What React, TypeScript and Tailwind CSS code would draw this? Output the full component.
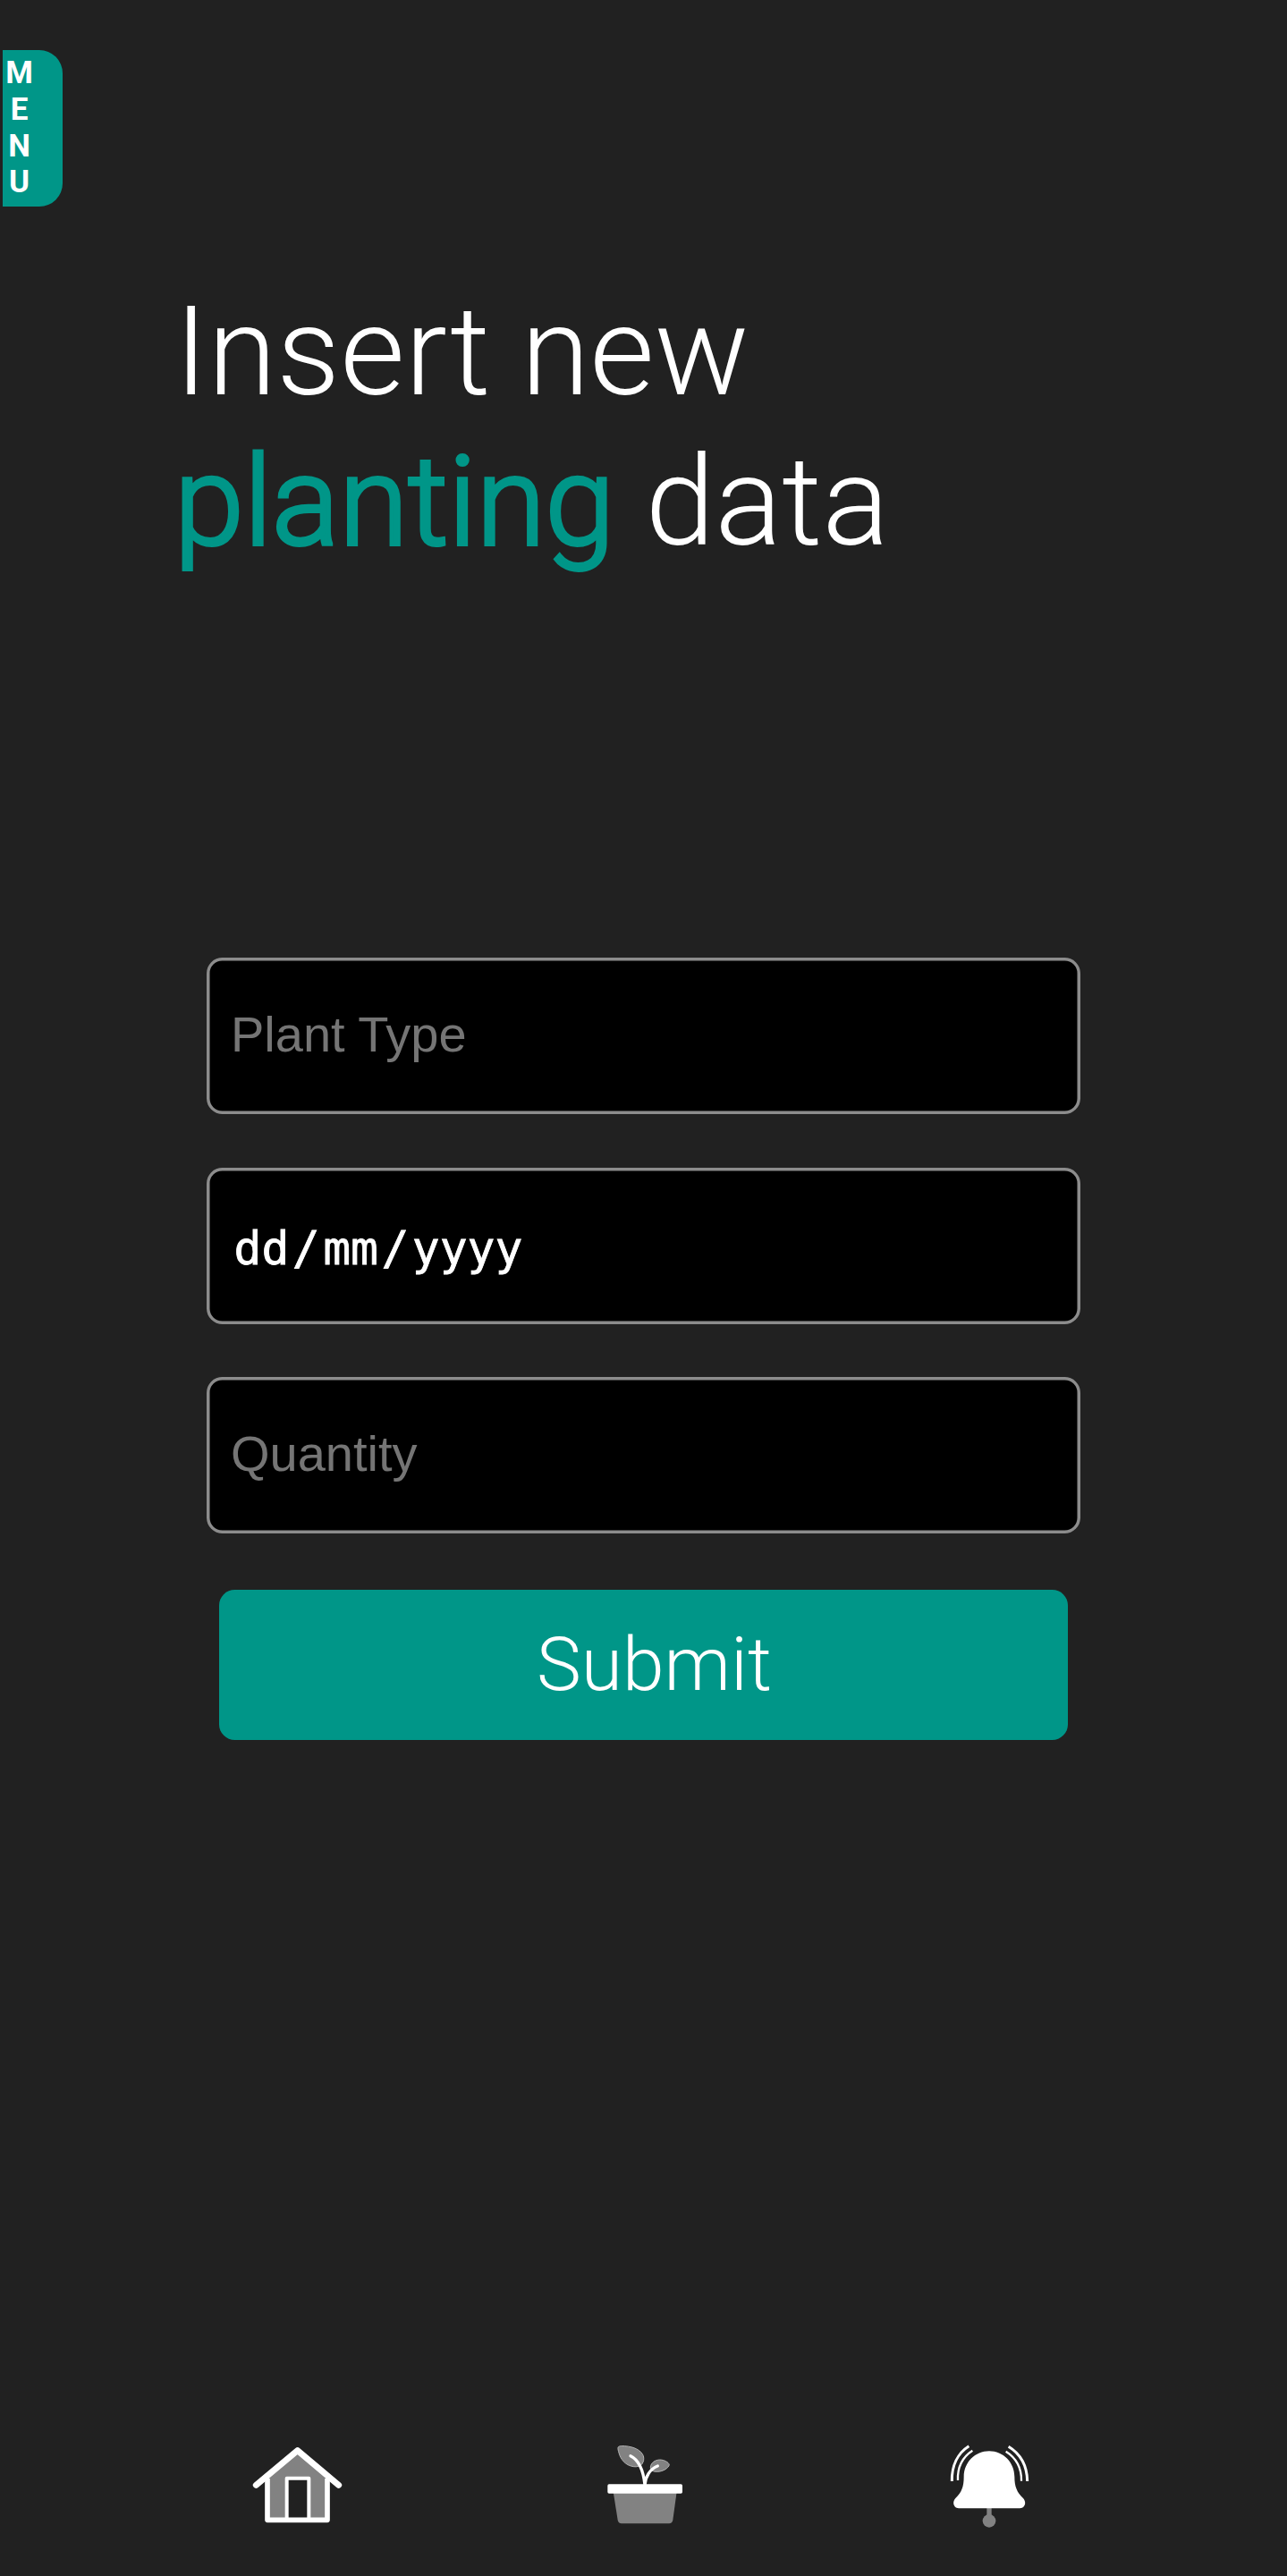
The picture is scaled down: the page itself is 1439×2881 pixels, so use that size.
import React from "react";

function HomeIcon() {
  return (
    <svg width="150" height="140" viewBox="0 0 450 420" fill="none">
      <path d="M118 183 218 100 318 183V323H118Z" fill="#828282" />
      <rect x="182" y="185" width="74" height="138" fill="#212121" />
      <path d="M117 186V325H318V186" stroke="#fff" strokeWidth="17" strokeLinejoin="round" />
      <path d="M182 320V185H256V320" stroke="#fff" strokeWidth="12" strokeLinejoin="round" />
      <path d="M79 208 218 92 356 208" stroke="#fff" strokeWidth="21" strokeLinecap="round" strokeLinejoin="round" />
    </svg>
  );
}

function PlantIcon() {
  return (
    <svg width="130" height="140" viewBox="0 0 390 420" fill="none">
      <path d="M77 230H290L277 325Q275 337 264 337H105Q94 337 92 325Z" fill="#828282" />
      <rect x="58" y="205" width="251" height="31" rx="5" fill="#fff" />
      <path
        d="M93 82C94 77 103 76 116 77C146 79 171 91 178 110C181 120 179 130 173 138C168 144 157 148 145 146C116 142 101 119 96 100C94 92 92 87 93 82Z"
        fill="#828282" stroke="#b4b4b4" strokeWidth="3"
      />
      <path
        d="M202 147C204 133 216 124 233 123C247 123 263 131 265 140C262 151 245 162 226 163C210 164 201 158 202 147Z"
        fill="#828282" stroke="#b4b4b4" strokeWidth="3"
      />
      <path d="M135 110C160 122 177 149 183 207C185 181 200 153 226 144" stroke="#fff" strokeWidth="10" strokeLinecap="round" strokeLinejoin="round" />
    </svg>
  );
}

function BellIcon() {
  return (
    <svg width="130" height="140" viewBox="0 0 390 420" fill="none">
      <path d="M198 283V328" stroke="#828282" strokeWidth="16" />
      <circle cx="198" cy="328" r="22" fill="#828282" />
      <path
        d="M198 94C245 94 283 132 283 180C283 213 291 232 312 252C325 267 317 286 301 286H96C80 286 72 267 85 252C106 232 113 213 113 180C113 132 151 94 198 94Z"
        fill="#fff"
      />
      <g stroke="#fff" strokeLinecap="butt">
        <path d="M130 77C92 101 72 144 73 195" strokeWidth="9" />
        <path d="M142 92C107 115 91 150 93 192" strokeWidth="7" />
        <path d="M263 79C302 103 325 142 326 195" strokeWidth="9" />
        <path d="M254 95C289 117 307 149 306 194" strokeWidth="7" />
      </g>
    </svg>
  );
}

const field =
  "flex h-[175px] w-[977px] items-center rounded-[17.5px] bg-black pb-[4px] pl-[27px] font-['Liberation_Sans',Arial,sans-serif] text-[56px] leading-[64px] text-[#757575] shadow-[inset_0_0_0_3.5px_#8c8c8c]";

export default function App() {
  return (
    <div className="flex h-[2881px] w-full flex-col overflow-hidden bg-[#212121] font-[Roboto,sans-serif] text-white">
      <button className="mt-[56px] ml-[3px] flex h-[175px] w-[67px] shrink-0 flex-col items-start rounded-r-[26px] bg-[#009688] pt-[6px] pl-[3px] text-[35px] leading-[40.8px] font-bold">
        {["M", "E", "N", "U"].map((letter) => (
          <span key={letter} className="block w-[31px] text-center">{letter}</span>
        ))}
      </button>

      <h1 className="mt-[78px] ml-[195px] text-[140px] leading-[168px] font-light whitespace-nowrap">
        Insert new
        <br />
        <span className="text-[#009688] [-webkit-text-stroke:4px_#009688]">planting</span> data
      </h1>

      <form className="mt-[426px] ml-[231px] flex w-[977px] flex-col">
        <div className={field}>Plant Type</div>
        <div className="mt-[60px] flex h-[175px] w-[977px] items-center rounded-[17.5px] bg-black pt-[5px] pl-[27px] font-['DejaVu_Sans_Mono',monospace] text-[51.3px] leading-[64px] [-webkit-text-stroke:0.8px_#fff] shadow-[inset_0_0_0_3.5px_#8c8c8c]">
          <span className="px-[3.5px]">dd</span>/<span className="px-[3.5px]">mm</span>/
          <span className="px-[3.5px]">yyyy</span>
        </div>
        <div className="mt-[59px]">
          <div className={field}>Quantity</div>
        </div>
        <button
          type="button"
          className="mt-[63px] ml-[14px] h-[168px] w-[949px] rounded-[17.5px] bg-[#009688] pl-[24px] text-center text-[84px] leading-[168px] font-light"
        >
          Submit
        </button>
      </form>

      <nav className="mt-auto mb-[31px] flex gap-[250px] pl-[260px]">
        <HomeIcon />
        <PlantIcon />
        <BellIcon />
      </nav>
    </div>
  );
}
